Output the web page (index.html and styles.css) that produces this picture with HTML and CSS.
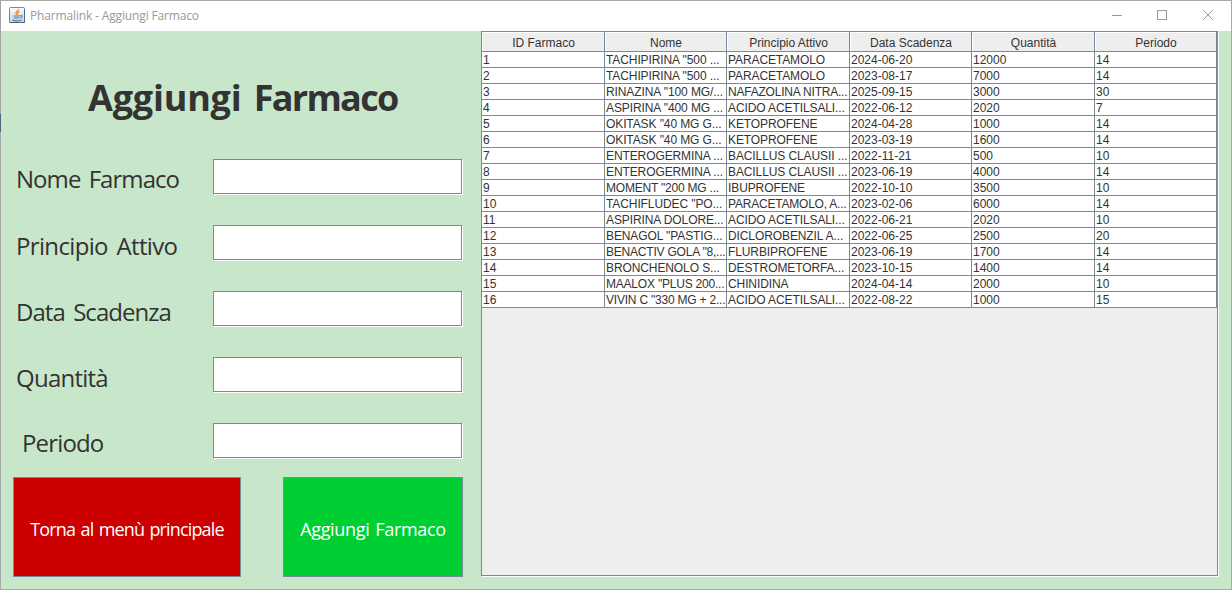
FILE: index.html
```html
<!DOCTYPE html>
<html lang="it">
<head>
<meta charset="utf-8">
<title>Pharmalink - Aggiungi Farmaco</title>
<link rel="stylesheet" href="styles.css">
</head>
<body>
<div class="window">
  <header class="titlebar">
    <svg class="app-icon" width="16" height="16" viewBox="0 0 16 16">
      <defs><linearGradient id="tile" x1="0" y1="0" x2="0" y2="1"><stop offset="0" stop-color="#fbfcfd"/><stop offset="1" stop-color="#c3d0dc"/></linearGradient></defs>
      <rect x=".5" y=".5" width="15" height="15" rx="1" fill="url(#tile)" stroke="#718ba5"/>
      <path d="M.5 15.500h15V2" fill="none" stroke="#49698a"/>
      <path d="M9.500 2C10 4 6 4.500 7 6.500L8 8M10.500 4.500C8 5.500 8.500 6.500 9 7.500" fill="none" stroke="#e8862e" stroke-width="1.200"/>
      <path d="M4.500 9h6.500M5 11h5M11.500 8.500c2.500-.5 2 2-.5 2.500M3.500 13c2 1 6 1 9 0" fill="none" stroke="#557b9c" stroke-width="1.100"/>
    </svg>
    <span class="caption">Pharmalink - Aggiungi Farmaco</span>
    <svg class="controls" width="104" height="12" viewBox="0 0 104 12" fill="none" stroke="#999" shape-rendering="crispEdges">
      <path d="M0 5.500h10"/>
      <rect x="45.500" y=".5" width="9" height="9"/>
      <path d="M91 0l10 10M101 0L91 10" shape-rendering="auto"/>
    </svg>
  </header>
  <main class="content">
    <section class="form">
      <h1 class="heading">Aggiungi <span class="tight">Farmaco</span></h1>
      <div class="field"><label class="label nome" for="f1">Nome Farmaco</label><input class="input" id="f1"></div>
      <div class="field"><label class="label principio" for="f2">Principio Attivo</label><input class="input" id="f2"></div>
      <div class="field"><label class="label data" for="f3">Data Scadenza</label><input class="input" id="f3"></div>
      <div class="field"><label class="label quantita" for="f4">Quantità</label><input class="input" id="f4"></div>
      <div class="field"><label class="label periodo" for="f5">Periodo</label><input class="input" id="f5"></div>
      <div class="actions">
        <button class="btn back"><span>Torna al menù principale</span></button>
        <button class="btn add"><span>Aggiungi Farmaco</span></button>
      </div>
    </section>
    <section class="scroll">
      <table class="grid">
        <colgroup><col class="wide"><col class="narrow"><col class="wide"><col class="narrow"><col class="wide"><col class="narrow"></colgroup>
        <thead><tr><th>ID Farmaco</th><th>Nome</th><th>Principio Attivo</th><th>Data Scadenza</th><th>Quantità</th><th>Periodo</th></tr></thead>
        <tbody>
          <tr><td>1</td><td>TACHIPIRINA "500 ...</td><td>PARACETAMOLO</td><td>2024-06-20</td><td>12000</td><td>14</td></tr>
          <tr><td>2</td><td>TACHIPIRINA "500 ...</td><td>PARACETAMOLO</td><td>2023-08-17</td><td>7000</td><td>14</td></tr>
          <tr><td>3</td><td>RINAZINA "100 MG/...</td><td class="snug">NAFAZOLINA NITRA...</td><td>2025-09-15</td><td>3000</td><td>30</td></tr>
          <tr><td>4</td><td>ASPIRINA "400 MG ...</td><td>ACIDO ACETILSALI...</td><td>2022-06-12</td><td>2020</td><td>7</td></tr>
          <tr><td>5</td><td>OKITASK "40 MG G...</td><td>KETOPROFENE</td><td>2024-04-28</td><td>1000</td><td>14</td></tr>
          <tr><td>6</td><td>OKITASK "40 MG G...</td><td>KETOPROFENE</td><td>2023-03-19</td><td>1600</td><td>14</td></tr>
          <tr><td>7</td><td>ENTEROGERMINA ...</td><td>BACILLUS CLAUSII ...</td><td>2022-11-21</td><td>500</td><td>10</td></tr>
          <tr><td>8</td><td>ENTEROGERMINA ...</td><td>BACILLUS CLAUSII ...</td><td>2023-06-19</td><td>4000</td><td>14</td></tr>
          <tr><td>9</td><td class="snug">MOMENT "200 MG ...</td><td>IBUPROFENE</td><td>2022-10-10</td><td>3500</td><td>10</td></tr>
          <tr><td>10</td><td>TACHIFLUDEC "PO...</td><td class="snug">PARACETAMOLO, A...</td><td>2023-02-06</td><td>6000</td><td>14</td></tr>
          <tr><td>11</td><td>ASPIRINA DOLORE...</td><td>ACIDO ACETILSALI...</td><td>2022-06-21</td><td>2020</td><td>10</td></tr>
          <tr><td>12</td><td>BENAGOL "PASTIG...</td><td>DICLOROBENZIL A...</td><td>2022-06-25</td><td>2500</td><td>20</td></tr>
          <tr><td>13</td><td class="snug">BENACTIV GOLA "8,...</td><td>FLURBIPROFENE</td><td>2023-06-19</td><td>1700</td><td>14</td></tr>
          <tr><td>14</td><td>BRONCHENOLO S...</td><td>DESTROMETORFA...</td><td>2023-10-15</td><td>1400</td><td>14</td></tr>
          <tr><td>15</td><td class="snug">MAALOX "PLUS 200...</td><td>CHINIDINA</td><td>2024-04-14</td><td>2000</td><td>10</td></tr>
          <tr><td>16</td><td class="snug">VIVIN C "330 MG + 2...</td><td>ACIDO ACETILSALI...</td><td>2022-08-22</td><td>1000</td><td>15</td></tr>
        </tbody>
      </table>
    </section>
  </main>
</div>
</body>
</html>
```
FILE: styles.css
```css
* { box-sizing: border-box; }
body { margin: 0; overflow: hidden; }
.window {
  width: 1232px; height: 590px; padding: 1px;
  display: flex; flex-direction: column;
  background: linear-gradient(#a3a3a3 0 114px, #4e6686 114px 132px, #a6aaa6 132px) left / 1px 100% no-repeat, #a6aaa6;
  font-family: "Open Sans", "Noto Sans", sans-serif;
}
.titlebar {
  height: 30px; background: #fff; flex: none;
  display: flex; align-items: center; padding: 0 15px 0 8px;
}
.app-icon { flex: none; margin-top: -2px; }
.caption { margin-left: 5px; font-size: 12px; line-height: 30px; color: #999; letter-spacing: -0.15px; white-space: nowrap; }
.controls { margin-left: auto; }
.content { flex: 1; min-height: 0; display: flex; background: #c8e6c9; }
.form { width: 480px; flex: none; color: #333; }
.heading {
  margin: 0; height: 128px; padding: 40px 0 0 87px;
  font-size: 36px; line-height: 54px; font-weight: 700; letter-spacing: -0.2px; word-spacing: 3px; white-space: nowrap;
}
.tight { letter-spacing: -1.7px; }
.field { height: 66px; display: flex; align-items: flex-start; padding-left: 15px; }
.label { width: 197px; flex: none; font-size: 24px; line-height: 36px; padding-top: 3px; letter-spacing: -0.95px; word-spacing: 3px; white-space: nowrap; }
.principio { letter-spacing: -0.65px; }
.quantita { letter-spacing: -0.75px; }
.periodo { padding-left: 6px; letter-spacing: -0.85px; }
.nome, .periodo { padding-top: 2px; }
.input {
  width: 249px; height: 35px; padding: 0 4px;
  border: 1px solid #7a8a99; border-radius: 0; outline: 0; background: #fff;
  box-shadow: 1px 1px 0 #fff;
}
.actions { display: flex; gap: 42px; padding-left: 12px; margin-top: -12px; }
.btn {
  height: 100px; padding: 3px 0 0; border: 1px solid #7a8a99; border-radius: 0;
  font: 18px "Open Sans", "Noto Sans", sans-serif; color: #fff; white-space: nowrap;
}
.back { width: 228px; background: #cc0000; letter-spacing: -0.85px; word-spacing: 1.5px; }
.add { width: 180px; background: #00cf33; letter-spacing: -0.32px; word-spacing: 1.5px; }
.scroll {
  width: 737px; height: 545px; border: 1px solid #7a8a99;
  background: #eee; box-shadow: 1px 1px 0 #fff;
}
.grid {
  width: 735px; table-layout: fixed; border-collapse: separate; border-spacing: 0;
  font: 12px/14px "Liberation Sans", Arial, sans-serif; color: #333;
}
.wide { width: 123px; }
.narrow { width: 122px; }
.grid th, .grid td { border-right: 1px solid #7a8a99; border-bottom: 1px solid #7a8a99; white-space: nowrap; }
.grid th { height: 20px; padding: 3px 0 0 1px; font-weight: 400; text-align: center; background: #eee; box-shadow: inset 1px 1px 0 #fff; }
.grid td { height: 16px; padding: 1px 0 0 1px; text-align: left; background: #fff; }
.grid td:nth-child(2), .grid td:nth-child(3) { letter-spacing: -0.1px; }
.grid td.snug { letter-spacing: -0.21px; }
```
